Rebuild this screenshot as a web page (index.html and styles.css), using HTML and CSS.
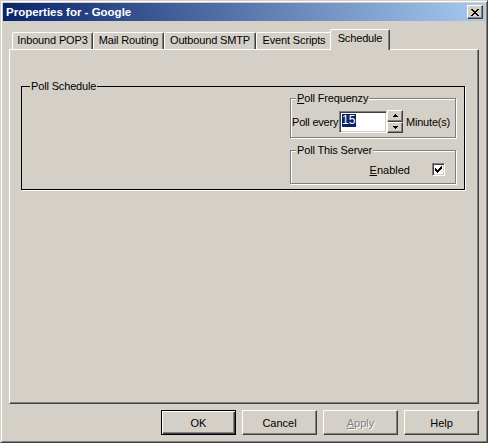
FILE: index.html
```html
<!DOCTYPE html>
<html>
<head>
<meta charset="utf-8">
<title>Properties for - Google</title>
<link rel="stylesheet" href="styles.css">
</head>
<body>
<div class="window">
  <div class="titlebar">
    <span class="title">Properties for - Google</span>
    <button class="close" type="button" aria-label="Close">
      <svg width="8" height="7" viewBox="0 0 8 7" shape-rendering="crispEdges"><path d="M0 0h2v1h1v1h2v-1h1v-1h2v1h-1v1h-1v1h-1v1h1v1h1v1h1v1h-2v-1h-1v-1h-2v1h-1v1h-2v-1h1v-1h1v-1h1v-1h-1v-1h-1v-1h-1z" fill="#000"/></svg>
    </button>
  </div>
  <div class="body">
    <div class="tabs">
      <div class="tab tab-pop">Inbound POP3</div>
      <div class="tab tab-mail">Mail Routing</div>
      <div class="tab tab-smtp">Outbound SMTP</div>
      <div class="tab tab-event">Event Scripts</div>
      <div class="tab tab-active">Schedule</div>
    </div>
    <div class="panel">
      <div class="group group-main">
        <div class="legend legend-main">Poll Schedule</div>
        <div class="main-inner">
          <div class="group etched group-freq">
            <div class="legend"><u>P</u>oll Frequenzy</div>
            <div class="freq-row">
              <span class="pe-label">Poll every</span>
              <div class="edit"><span class="sel">15</span></div>
              <div class="updown">
                <div class="ud-btn"><svg width="5" height="3" viewBox="0 0 5 3" shape-rendering="crispEdges"><path d="M2 0h1v1h1v1h1v1h-5v-1h1v-1h1z" fill="#000"/></svg></div>
                <div class="ud-btn"><svg width="5" height="3" viewBox="0 0 5 3" shape-rendering="crispEdges"><path d="M0 0h5v1h-1v1h-1v1h-1v-1h-1v-1h-1z" fill="#000"/></svg></div>
              </div>
              <span class="unit">Minute(s)</span>
            </div>
          </div>
          <div class="group etched group-server">
            <div class="legend">Poll This Server</div>
            <div class="server-row">
              <span class="en-label"><u>E</u>nabled</span>
              <div class="checkbox"><svg width="7" height="7" viewBox="0 0 7 7" shape-rendering="crispEdges"><path d="M6 0h1v3h-1v1h-1v1h-1v1h-1v1h-1v-1h-1v-1h-1v-3h1v1h1v1h1v-1h1v-1h1v-1h1z" fill="#000"/></svg></div>
            </div>
          </div>
        </div>
      </div>
    </div>
    <div class="buttons">
      <button class="btn btn-default" type="button">OK</button>
      <button class="btn" type="button">Cancel</button>
      <button class="btn btn-disabled" type="button"><u>A</u>pply</button>
      <button class="btn" type="button">Help</button>
    </div>
  </div>
</div>
</body>
</html>
```
FILE: styles.css
```css
* { box-sizing: border-box; }
html, body { margin: 0; padding: 0; }
body {
  width: 488px;
  height: 443px;
  background: #d4d0c8;
  font-family: "Liberation Sans", Arial, sans-serif;
  font-size: 11px;
  color: #000;
  overflow: hidden;
}
.window {
  width: 488px;
  height: 443px;
  border: 1px solid;
  border-color: #d4d0c8 #404040 #404040 #d4d0c8;
  box-shadow: inset 1px 1px #fff, inset -1px -1px #808080;
  padding: 2px;
  display: flex;
  flex-direction: column;
  background: #d4d0c8;
}
.titlebar {
  height: 18px;
  flex: none;
  background: linear-gradient(to right, #0a246a, #a6caf0);
  display: flex;
  align-items: flex-start;
  justify-content: space-between;
}
.title {
  color: #fff;
  font-weight: bold;
  font-size: 11.5px;
  line-height: 18px;
  padding-left: 3px;
}
.close {
  width: 16px;
  height: 14px;
  margin: 2px 2px 0 0;
  padding: 0;
  background: #d4d0c8;
  border: 1px solid;
  border-color: #fff #404040 #404040 #fff;
  box-shadow: inset -1px -1px #808080;
  display: flex;
  align-items: center;
  justify-content: center;
}
.close svg { display: block; margin-left: -1px; }
.body {
  flex: 1;
  padding: 8px 6px 0;
  display: flex;
  flex-direction: column;
}
.tabs {
  height: 20px;
  display: flex;
  align-items: flex-end;
  padding-left: 3px;
}
.tab {
  height: 17px;
  border: 1px solid;
  border-bottom: 0;
  border-color: #fff #404040 transparent #fff;
  box-shadow: inset -1px 0 #808080;
  border-radius: 2px 2px 0 0;
  text-align: center;
  line-height: 15px;
  letter-spacing: -0.15px;
  white-space: nowrap;
  background: #d4d0c8;
}
.tab-pop { width: 81px; }
.tab-mail { width: 71px; }
.tab-smtp { width: 92px; }
.tab-event { width: 76px; }
.tab-active {
  width: 60px;
  height: 21px;
  margin: 0 -2px -1px -2px;
  line-height: 16px;
  position: relative;
  z-index: 2;
}
.panel {
  height: 355px;
  flex: none;
  border: 1px solid;
  border-color: #fff #404040 #404040 #fff;
  box-shadow: inset -1px -1px #808080;
  padding: 36px 13px 0 11px;
}
.group {
  display: flex;
  flex-direction: column;
}
.group-main {
  height: 104px;
  border: 1px solid #000;
  box-shadow: 1px 1px 0 #fff;
}
.legend {
  align-self: flex-start;
  margin: -7px 0 0 5px;
  padding: 0 1px;
  background: #d4d0c8;
  line-height: 13px;
  white-space: nowrap;
  letter-spacing: -0.15px;
}
.legend-main { margin-left: 8px; }
.main-inner {
  display: flex;
  flex-direction: column;
  align-items: flex-end;
  padding-right: 8px;
}
.etched {
  width: 166px;
  border: 1px solid #808080;
  box-shadow: inset 1px 1px #fff, 1px 1px 0 #fff;
}
.group-freq {
  height: 40px;
  margin-top: 5px;
}
.group-server {
  height: 34px;
  margin-top: 12px;
}
.freq-row {
  display: flex;
  align-items: center;
  margin-top: 6px;
  padding-left: 1px;
  height: 22px;
}
.pe-label {
  width: 47px;
  white-space: nowrap;
  letter-spacing: -0.2px;
}
.edit {
  width: 48px;
  height: 22px;
  background: #fff;
  border: 1px solid;
  border-color: #808080 #fff #fff #808080;
  box-shadow: inset 1px 1px #404040, inset -1px -1px #d4d0c8;
  padding: 2px 0 0 2px;
}
.sel {
  display: inline-block;
  background: #0a246a;
  color: #fff;
  line-height: 13px;
  padding: 0 1px 0 0;
  font-size: 12px;
}
.updown {
  width: 16px;
  height: 23px;
  margin-top: -1px;
  display: flex;
  flex-direction: column;
}
.ud-btn {
  height: 11.5px;
  flex: 1;
  background: #d4d0c8;
  border: 1px solid;
  border-color: #fff #404040 #404040 #fff;
  box-shadow: inset -1px -1px #808080;
  display: flex;
  align-items: center;
  justify-content: center;
}
.ud-btn svg { display: block; }
.unit {
  margin-left: 3px;
  white-space: nowrap;
  letter-spacing: -0.2px;
}
.server-row {
  display: flex;
  align-items: center;
  justify-content: flex-end;
  margin-top: 5px;
  padding-right: 10px;
  height: 15px;
}
.en-label { margin-right: 22px; }
.checkbox {
  width: 13px;
  height: 13px;
  background: #fff;
  border: 1px solid;
  border-color: #808080 #fff #fff #808080;
  box-shadow: inset 1px 1px #404040, inset -1px -1px #d4d0c8;
  display: flex;
  align-items: center;
  justify-content: center;
}
.checkbox svg { display: block; }
.buttons {
  display: flex;
  justify-content: flex-end;
  gap: 6px;
  margin-top: 6px;
}
.btn {
  width: 75px;
  height: 25px;
  padding: 0;
  font: inherit;
  color: #000;
  background: #d4d0c8;
  border: 1px solid;
  border-color: #fff #404040 #404040 #fff;
  box-shadow: inset -1px -1px #808080;
}
.btn-default {
  border-color: #000;
  box-shadow: inset 1px 1px #fff, inset -1px -1px #404040, inset -2px -2px #808080;
}
.btn-disabled {
  color: #808080;
  text-shadow: 1px 1px 0 #fff;
}
```
